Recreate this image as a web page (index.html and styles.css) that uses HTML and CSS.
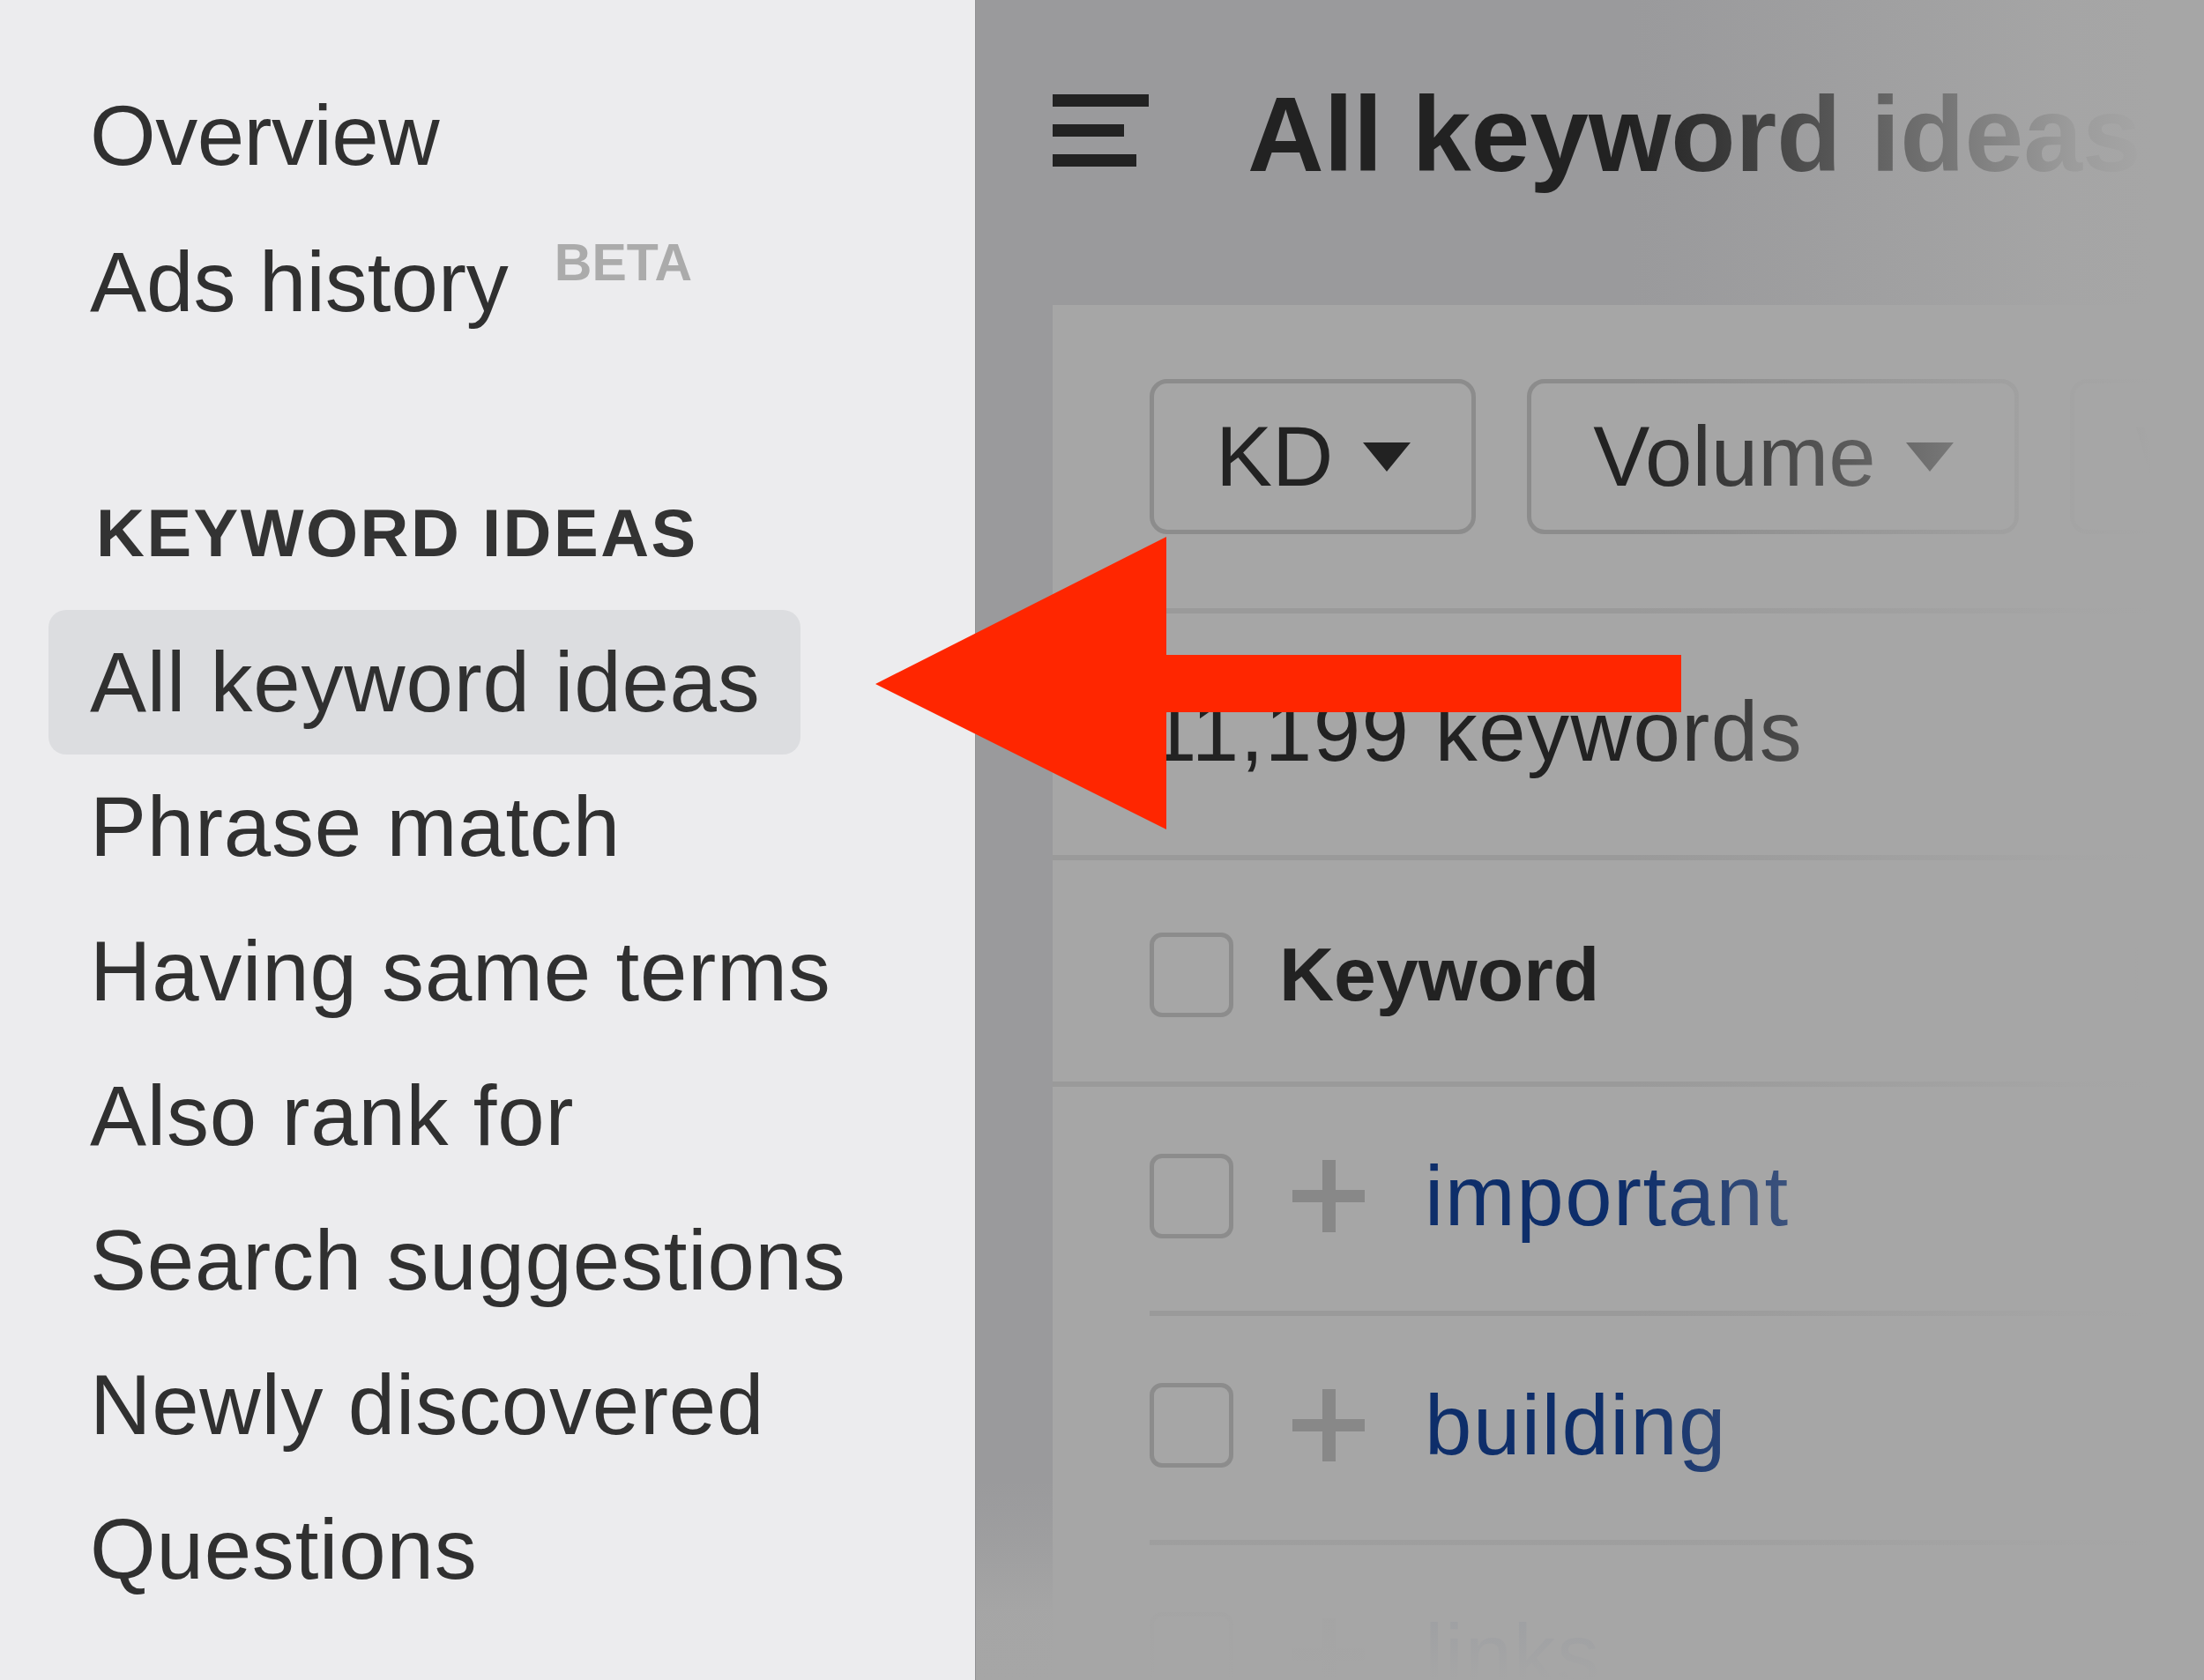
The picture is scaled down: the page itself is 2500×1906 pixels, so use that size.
FILE: index.html
```html
<!DOCTYPE html>
<html lang="en">
<head>
  <meta charset="UTF-8">
  <title>All keyword ideas</title>
  <link rel="stylesheet" href="styles.css">
</head>
<body>
  <aside class="sidebar">
    <nav class="nav-top">
      <a href="#">Overview</a>
      <a href="#">Ads history<span class="beta">BETA</span></a>
    </nav>

    <h2 class="section-title">KEYWORD IDEAS</h2>
    <nav class="nav-list">
      <a href="#" class="active">All keyword ideas</a>
      <a href="#">Phrase match</a>
      <a href="#">Having same terms</a>
      <a href="#">Also rank for</a>
      <a href="#">Search suggestions</a>
      <a href="#">Newly discovered</a>
      <a href="#">Questions</a>
    </nav>
  </aside>

  <main class="main">
    <header class="topbar">
      <svg class="burger" width="109" height="82" viewBox="0 0 109 82">
        <rect x="0" y="0" width="109" height="14" fill="#222"/>
        <rect x="0" y="34" width="81" height="14" fill="#222"/>
        <rect x="0" y="68" width="95" height="14" fill="#222"/>
      </svg>
      <h1 class="page-title">All keyword ideas</h1>
    </header>

    <section class="card">
      <div class="filters">
        <button class="filter-btn">KD <span class="caret"></span></button>
        <button class="filter-btn">Volume <span class="caret"></span></button>
        <button class="filter-btn">Word count <span class="caret"></span></button>
      </div>

      <div class="count">11,199 keywords</div>

      <div class="table-head">
        <span class="check"></span>
        <span class="head-label">Keyword</span>
        <span class="col-divider"></span>
      </div>

      <div class="rows">
        <div class="row">
          <span class="check"></span>
          <svg class="plus" width="82" height="82" viewBox="0 0 82 82">
            <rect x="34" y="0" width="15" height="82" fill="#888"/>
            <rect x="0" y="34" width="82" height="14" fill="#888"/>
          </svg>
          <a href="#" class="kw">important</a>
        </div>
        <div class="row">
          <span class="check"></span>
          <svg class="plus" width="82" height="82" viewBox="0 0 82 82">
            <rect x="34" y="0" width="15" height="82" fill="#888"/>
            <rect x="0" y="34" width="82" height="14" fill="#888"/>
          </svg>
          <a href="#" class="kw">building</a>
        </div>
        <div class="row">
          <span class="check"></span>
          <svg class="plus" width="82" height="82" viewBox="0 0 82 82">
            <rect x="34" y="0" width="15" height="82" fill="#888"/>
            <rect x="0" y="34" width="82" height="14" fill="#888"/>
          </svg>
          <a href="#" class="kw">links</a>
        </div>
      </div>
    </section>

    <!-- fades over the page content -->
    <div class="fade-right"></div>
    <div class="fade-bottom"></div>
  </main>

  <!-- red pointer arrow -->
  <svg class="arrow" width="914" height="332" viewBox="0 0 914 332">
    <polygon points="0,167 330,0 330,134 914,134 914,199 330,199 330,332" fill="#ff2600"/>
  </svg>
</body>
</html>
```

FILE: styles.css
```css
body {
  margin: 0;
  height: 1906px;
  display: flex;
  position: relative;
  overflow: hidden;
  font-family: "Liberation Sans", Arial, sans-serif;
  background: #a6a6a6;
}
a {
  text-decoration: none;
  color: inherit;
}

/* sidebar */
.sidebar {
  width: 1107px;
  flex-shrink: 0;
  box-sizing: border-box;
  padding: 71px 0 0 55px;
  background: #ececee;
  border-right: 1px solid #909092;
  color: #303030;
}
.nav-top a {
  display: block;
  height: 166px;
  line-height: 166px;
  padding-left: 47px;
  font-size: 96px;
  white-space: nowrap;
}
.nav-top a:first-child {
  letter-spacing: -0.5px;
}
.beta {
  margin-left: 52px;
  font-size: 59px;
  line-height: 59px;
  font-weight: 700;
  letter-spacing: 0;
  color: #ababab;
  vertical-align: 35px;
}
.section-title {
  margin: 152px 0 37px 54px;
  font-size: 76px;
  line-height: 100px;
  font-weight: 700;
  letter-spacing: 2.5px;
  color: #333;
}
.nav-list a {
  display: block;
  width: 853px;
  height: 164px;
  line-height: 164px;
  box-sizing: border-box;
  padding-left: 47px;
  border-radius: 20px;
  font-size: 96px;
  letter-spacing: 0.8px;
  white-space: nowrap;
}
.nav-list a.active {
  background: #dcdde0;
}

/* main area (dimmed) */
.main {
  flex: 1;
  position: relative;
  overflow: hidden;
  background: #9a9a9c;
}
.topbar {
  height: 346px;
  box-sizing: border-box;
  padding: 92px 0 0 87px;
  display: flex;
  align-items: flex-start;
}
.burger {
  margin-top: 15px;
  flex-shrink: 0;
}
.page-title {
  margin: 0 0 0 112px;
  font-size: 120px;
  line-height: 120px;
  font-weight: 700;
  color: #222;
  white-space: nowrap;
}
.card {
  margin-left: 87px;
  background: #a6a6a6;
  min-height: 1560px;
}
.filters {
  height: 344px;
  padding-left: 110px;
  display: flex;
  align-items: center;
  gap: 58px;
  border-bottom: 6px solid #9a9a9a;
}
.filter-btn {
  flex-shrink: 0;
  height: 176px;
  box-sizing: border-box;
  padding: 0 69px 0 70px;
  display: flex;
  align-items: center;
  gap: 34px;
  background: transparent;
  border: 5px solid #8c8c8c;
  border-radius: 20px;
  font-family: inherit;
  font-size: 96px;
  color: #222;
  white-space: nowrap;
}
.caret {
  width: 0;
  height: 0;
  border-left: 27px solid transparent;
  border-right: 27px solid transparent;
  border-top: 33px solid #222;
}
.count {
  height: 280px;
  box-sizing: border-box;
  padding: 0 0 6px 110px;
  display: flex;
  align-items: center;
  font-size: 96px;
  letter-spacing: 1.5px;
  color: #222;
  border-bottom: 6px solid #9a9a9a;
}
.table-head {
  height: 257px;
  box-sizing: border-box;
  padding: 8px 0 0 110px;
  display: flex;
  align-items: center;
  border-bottom: 6px solid #9a9a9a;
}
.check {
  width: 95px;
  height: 96px;
  flex-shrink: 0;
  box-sizing: border-box;
  border: 5px solid #8c8c8c;
  border-radius: 14px;
}
.head-label {
  margin-left: 52px;
  font-size: 86px;
  font-weight: 700;
  color: #222;
}
.col-divider {
  margin: 0 74px 0 auto;
  width: 4px;
  height: 64px;
  background: #9e9e9e;
}
.rows {
  margin-left: 110px;
}
.row {
  height: 260px;
  box-sizing: border-box;
  padding-bottom: 6px;
  display: flex;
  align-items: center;
  border-bottom: 6px solid #9a9a9a;
}
.plus {
  margin-left: 67px;
  flex-shrink: 0;
}
.kw {
  margin-left: 68px;
  font-size: 96px;
  letter-spacing: 1.5px;
  color: #0e2e6a;
}

/* overlays */
.fade-right {
  position: absolute;
  top: 0;
  bottom: 0;
  left: 743px;
  right: 0;
  background: linear-gradient(to right,
    rgba(166,166,166,0) 0,
    rgba(166,166,166,0.25) 150px,
    rgba(166,166,166,0.62) 350px,
    rgba(166,166,166,0.92) 500px,
    #a6a6a6 590px);
}
.fade-bottom {
  position: absolute;
  left: 0;
  right: 0;
  top: 1680px;
  bottom: 0;
  background: linear-gradient(to bottom,
    rgba(166,166,166,0) 0,
    rgba(166,166,166,0.35) 70px,
    rgba(166,166,166,0.95) 150px,
    #a6a6a6 226px);
}
.arrow {
  position: absolute;
  left: 993px;
  top: 609px;
}
```
